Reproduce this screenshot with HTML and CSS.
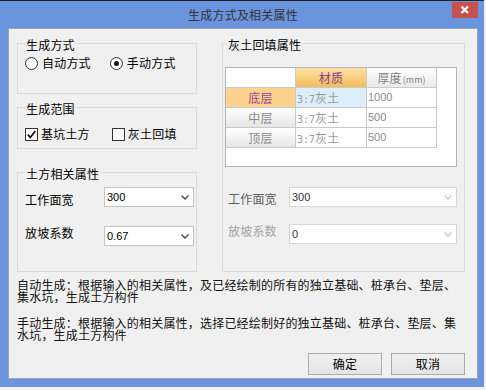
FILE: index.html
```html
<!DOCTYPE html>
<html lang="zh-CN">
<head>
<meta charset="utf-8">
<title>生成方式及相关属性</title>
<link rel="stylesheet" href="styles.css">
</head>
<body>
<div class="window">
  <div class="titlebar">
    <span class="title">生成方式及相关属性</span>
    <div class="close">
      <svg width="26" height="16" viewBox="0 0 26 16"><path d="M9.5 4.5 L16 11 M16 4.5 L9.5 11" stroke="#fff" stroke-width="2.2" fill="none"/></svg>
    </div>
  </div>
  <div class="content">
    <div class="top-row">
      <div class="left-col">
        <div class="group g1">
          <span class="legend">生成方式</span>
          <div class="opts">
            <span class="opt"><span class="radio"></span><span class="opt-text">自动方式</span></span>
            <span class="opt opt-second"><span class="radio checked"></span><span class="opt-text">手动方式</span></span>
          </div>
        </div>
        <div class="group g2">
          <span class="legend">生成范围</span>
          <div class="opts">
            <span class="opt opt-cb"><span class="check checked"><svg width="11" height="11" viewBox="0 0 11 11"><path d="M1.8 5.6 L4.3 8.4 L9.4 2" stroke="#111" stroke-width="1.7" fill="none"/></svg></span><span class="opt-text">基坑土方</span></span>
            <span class="opt opt-cb opt-cb2"><span class="check"></span><span class="opt-text">灰土回填</span></span>
          </div>
        </div>
        <div class="group g3">
          <span class="legend">土方相关属性</span>
          <div class="field field-1">
            <span class="lbl lbl-1">工作面宽</span>
            <div class="combo combo-l"><span class="val">300</span><svg class="chev" width="8" height="5" viewBox="0 0 8 5"><path d="M0.5 0.5 L4 4 L7.5 0.5" stroke="#444" stroke-width="1.3" fill="none"/></svg></div>
          </div>
          <div class="field field-2">
            <span class="lbl lbl-2">放坡系数</span>
            <div class="combo combo-l"><span class="val">0.67</span><svg class="chev" width="8" height="5" viewBox="0 0 8 5"><path d="M0.5 0.5 L4 4 L7.5 0.5" stroke="#444" stroke-width="1.3" fill="none"/></svg></div>
          </div>
        </div>
      </div>
      <div class="group gr">
        <span class="legend legend-r">灰土回填属性</span>
        <div class="table-wrap">
          <div class="grid">
            <div class="cell corner"></div>
            <div class="cell hd hd-sel">材质</div>
            <div class="cell hd">厚度<span class="unit">(mm)</span></div>
            <div class="cell rh rh-sel">底层</div>
            <div class="cell td td-sel"><span class="mono">3:7</span>灰土</div>
            <div class="cell td num">1000</div>
            <div class="cell rh">中层</div>
            <div class="cell td"><span class="mono">3:7</span>灰土</div>
            <div class="cell td num">500</div>
            <div class="cell rh">顶层</div>
            <div class="cell td"><span class="mono">3:7</span>灰土</div>
            <div class="cell td num">500</div>
          </div>
        </div>
        <div class="field field-r1">
          <span class="lbl lbl-r lbl-r1">工作面宽</span>
          <div class="combo combo-r"><span class="val">300</span><svg class="chev" width="8" height="5" viewBox="0 0 8 5"><path d="M0.5 0.5 L4 4 L7.5 0.5" stroke="#c4c4c4" stroke-width="1.3" fill="none"/></svg></div>
        </div>
        <div class="field field-r2">
          <span class="lbl lbl-r lbl-r2">放坡系数</span>
          <div class="combo combo-r"><span class="val">0</span><svg class="chev" width="8" height="5" viewBox="0 0 8 5"><path d="M0.5 0.5 L4 4 L7.5 0.5" stroke="#c4c4c4" stroke-width="1.3" fill="none"/></svg></div>
        </div>
      </div>
    </div>
    <p class="desc">自动生成：根据输入的相关属性，及已经绘制的所有的独立基础、桩承台、垫层、<br>集水坑，生成土方构件</p>
    <p class="desc desc-2">手动生成：根据输入的相关属性，选择已经绘制好的独立基础、桩承台、垫层、集<br>水坑，生成土方构件</p>
    <div class="buttons">
      <button class="btn">确定</button>
      <button class="btn">取消</button>
    </div>
  </div>
</div>
</body>
</html>
```
FILE: styles.css
```css
body {
  margin: 0;
  background: #f3f3f3;
  font-family: "Noto Sans CJK SC", "Microsoft YaHei", sans-serif;
  font-size: 12px;
  letter-spacing: 0.2px;
  color: #000;
}

.window {
  position: relative;
  width: 484px;
  height: 387px;
  box-sizing: border-box;
  border-top: 1px solid #202020;
  background: #6b94de;
  padding: 0 6px 8px 8px;
  display: flex;
  flex-direction: column;
}

.titlebar {
  height: 27px;
  flex: none;
  display: flex;
  align-items: center;
  justify-content: center;
  color: #333;
  line-height: 14px;
}

.close {
  position: absolute;
  top: 1px;
  right: 6px;
  width: 26px;
  height: 16px;
  background: #c75050;
  display: flex;
}

.content {
  flex: 1;
  background: #f0f0f0;
  border: 1px solid #98a3b6;
  padding: 14px 12px 0 8px;
  display: flex;
  flex-direction: column;
}

.top-row {
  display: flex;
  gap: 25px;
  height: 229px;
  flex: none;
}

.left-col {
  width: 180px;
  display: flex;
  flex-direction: column;
}

.group {
  box-sizing: border-box;
  border: 1px solid #d9d9d9;
  display: flex;
  flex-direction: column;
  align-items: flex-start;
}

.g1 { height: 51px; margin-bottom: 13px; }
.g2 { height: 42px; margin-bottom: 23px; }
.g3 { height: 100px; }
.gr { width: 243px; }

.legend {
  height: 14px;
  line-height: 14px;
  margin: -6px 0 0 7px;
  padding: 0 1px;
  background: #f0f0f0;
  white-space: nowrap;
}

.legend-r { margin-left: 4px; }

.opts {
  display: flex;
  align-items: center;
  height: 14px;
  margin-top: 4px;
  padding-left: 7px;
}

.g2 .opts { margin-top: 11px; }

.opt {
  display: flex;
  align-items: center;
  gap: 4px;
  line-height: 14px;
  white-space: nowrap;
}

.opt-second { margin-left: 19px; }
.opt-cb { gap: 3px; }
.opt-cb2 { margin-left: 22px; }

.radio {
  width: 13px;
  height: 13px;
  box-sizing: border-box;
  border: 1px solid #333;
  border-radius: 50%;
  background: #fff;
  display: flex;
  align-items: center;
  justify-content: center;
}

.radio.checked::after {
  content: "";
  width: 5px;
  height: 5px;
  border-radius: 50%;
  background: #111;
}

.check {
  width: 13px;
  height: 13px;
  box-sizing: border-box;
  border: 1px solid #333;
  background: #fff;
  display: flex;
  align-items: center;
  justify-content: center;
}

.field {
  display: flex;
  align-items: flex-start;
  height: 20px;
  padding-left: 7px;
}

.field-1 { margin-top: 6px; }
.field-2 { margin-top: 19px; }

.lbl {
  width: 79px;
  flex: none;
  line-height: 14px;
  white-space: nowrap;
}

.lbl-1 { margin-top: 6px; }
.lbl-2 { margin-top: 0; }

.combo {
  height: 20px;
  box-sizing: border-box;
  border: 1px solid #c3c3c3;
  background: #fff;
  display: flex;
  align-items: center;
  justify-content: space-between;
  padding: 0 4px 0 2px;
  font-family: "Liberation Sans", Arial, sans-serif;
  font-size: 11px;
  letter-spacing: 0;
  color: #000;
}

.combo-l { width: 90px; }
.combo-r { width: 168px; border-color: #d6d6d6; color: #333; }

.table-wrap {
  margin: 15px 0 0 2px;
  width: 232px;
  height: 100px;
  box-sizing: border-box;
  border: 1px solid #b4b4b4;
  background: #fff;
  flex: none;
}

.grid {
  display: grid;
  grid-template-columns: 70px 71px 70px;
  grid-auto-rows: 20px;
  width: 211px;
}

.cell {
  box-sizing: border-box;
  border-right: 1px solid #cacaca;
  border-bottom: 1px solid #cacaca;
  line-height: 19px;
  white-space: nowrap;
  overflow: hidden;
}

.corner { background: #fff; }

.hd {
  text-align: center;
  color: #858585;
  background: linear-gradient(#ffffff, #e9e9e9);
}

.hd-sel {
  color: #8a3a8e;
  background: linear-gradient(#fde2a6, #f4bb5c);
}

.unit {
  font-size: 9px;
  letter-spacing: 0;
  margin-left: 1px;
}

.rh {
  text-align: center;
  color: #8a8a8a;
  background: linear-gradient(#ffffff, #e6e6e6);
}

.rh-sel {
  color: #9c3f98;
  background: #fdd28c;
}

.td {
  padding-left: 1px;
  color: #9a9a9a;
}

.td-sel { background: #deedfc; }

.mono {
  font-family: "DejaVu Sans Mono", monospace;
  font-size: 10px;
  letter-spacing: 0;
}

.num {
  font-family: "Liberation Sans", Arial, sans-serif;
  font-size: 11px;
  letter-spacing: 0;
  color: #8a8a8a;
}

.field-r1 { margin-top: 20px; padding-left: 5px; }
.field-r2 { margin-top: 17px; padding-left: 5px; }

.lbl-r { width: 61px; }
.lbl-r1 { margin-top: 5px; color: #5e5e5e; }
.lbl-r2 { margin-top: 0; color: #a3a3a3; }

.desc {
  margin: 7px 0 0;
  line-height: 12px;
  white-space: nowrap;
  color: #111;
}

.desc-2 { margin-top: 14px; }

.buttons {
  display: flex;
  justify-content: flex-end;
  gap: 9px;
  margin-top: 12px;
}

.btn {
  width: 74px;
  height: 22px;
  box-sizing: border-box;
  border: 1px solid #acacac;
  background: linear-gradient(#f0f0f0, #e4e4e4);
  font: inherit;
  letter-spacing: inherit;
  color: #000;
  padding: 0;
  line-height: 14px;
}
```
